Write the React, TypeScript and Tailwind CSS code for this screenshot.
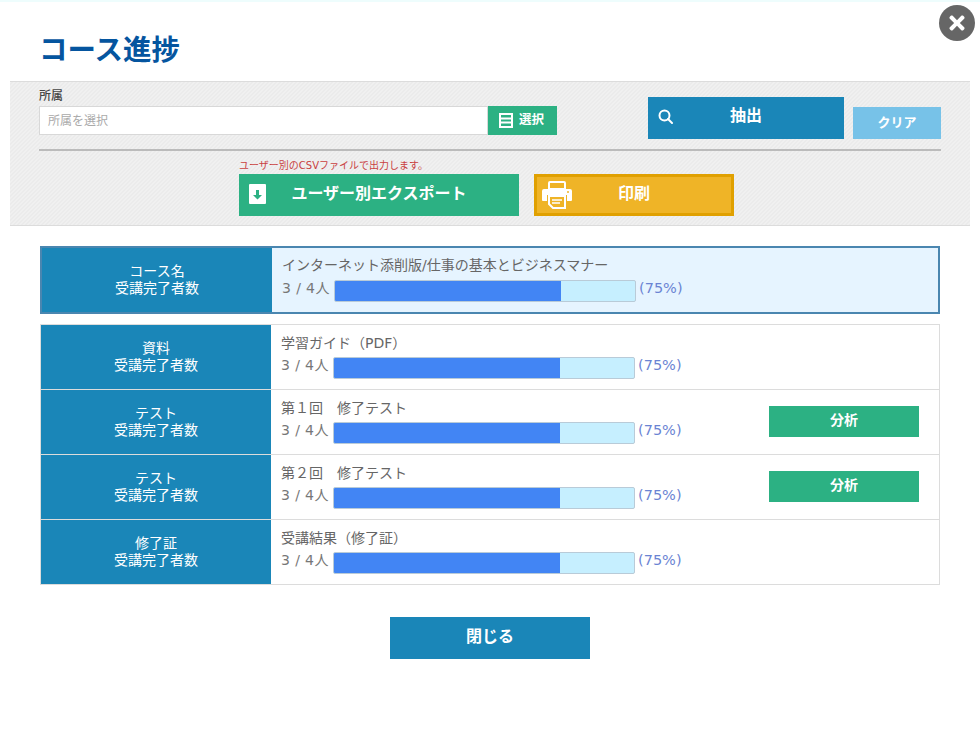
import { FaTimes } from 'react-icons/fa';

const font = { fontFamily: '"DejaVu Sans", "Noto Sans CJK JP", sans-serif' };

function ListIcon() {
  return (
    <svg width="14" height="15" viewBox="0 0 14 15" fill="none" stroke="white" strokeWidth="2">
      <rect x="1" y="1" width="12" height="13" />
      <path d="M1 5.5h12M1 9.5h12" />
    </svg>
  );
}

function SearchIcon() {
  return (
    <svg width="15" height="15" viewBox="0 0 15 15" fill="none" stroke="white" strokeWidth="2">
      <circle cx="6.5" cy="6.5" r="5" />
      <path d="M10 10l4 4" strokeLinecap="round" />
    </svg>
  );
}

function DownloadIcon() {
  return (
    <svg width="17" height="20" viewBox="0 0 17 20">
      <rect width="17" height="20" rx="1" fill="white" />
      <path d="M7 6h3v5h3l-4.5 4.5L4 11h3z" fill="#2cb183" />
    </svg>
  );
}

function PrintIcon() {
  return (
    <svg width="30" height="28" viewBox="0 0 30 28">
      <path d="M7 8V2a1 1 0 0 1 1-1h14a1 1 0 0 1 1 1v6z" fill="none" stroke="white" strokeWidth="2" />
      <path d="M2 8h26a2 2 0 0 1 2 2v9a1 1 0 0 1-1 1h-4v-6H5v6H1a1 1 0 0 1-1-1v-9a2 2 0 0 1 2-2z" fill="white" />
      <circle cx="26" cy="11" r="1" fill="#efb427" />
      <path d="M7 15h16v12H11l-4-4z" fill="none" stroke="white" strokeWidth="2" />
      <path d="M10 19h10M10 22h8" stroke="white" strokeWidth="1.5" />
    </svg>
  );
}

function Progress() {
  return (
    <div className="flex h-[22px] items-center text-[#777]">
      <span className="mb-[6px] w-[52px] whitespace-nowrap text-[14px] leading-[16px] tracking-[0.4px]">3 / 4人</span>
      <div className="flex h-[22px] w-[302px] overflow-hidden rounded-[2px] border border-[#b9cbd8] bg-[#c6efff]">
        <div className="-my-px -ml-px w-[227px] bg-[#4285f4]" />
      </div>
      <span className="mb-[6px] ml-[3px] text-[14.5px] leading-[16px] text-[#6b84d3]">(75%)</span>
    </div>
  );
}

function HeadCell({ first }: { first: string }) {
  return (
    <div className="flex w-[230px] shrink-0 flex-col items-center justify-center bg-[#1a86b8] text-[14px] leading-[17px] text-white">
      <span>{first}</span>
      <span>受講完了者数</span>
    </div>
  );
}

function Row({ head, title, analyze, last }: { head: string; title: string; analyze?: boolean; last?: boolean }) {
  return (
    <div className={`flex ${last ? 'h-[64px]' : 'h-[65px] border-b border-[#dcdcdc]'}`}>
      <HeadCell first={head} />
      <div className="flex-1 pl-[10px] pt-[9px]">
        <div className="mb-[5px] h-[18px] text-[14px] leading-[18px] text-[#666]">{title}</div>
        <Progress />
      </div>
      {analyze && (
        <div className="flex w-[170px] items-start pt-[16px]">
          <button className="h-[31px] w-[150px] bg-[#2cb183] pb-[2px] text-[14px] font-bold text-white">分析</button>
        </div>
      )}
    </div>
  );
}

export default function App() {
  return (
    <div className="relative h-[740px] w-[980px] overflow-hidden border-t-2 border-[#eefdfd] bg-white" style={font}>
      <button className="absolute left-[939px] top-[3px] flex h-[36px] w-[36px] items-center justify-center rounded-full bg-[#666] text-white">
        <FaTimes size={22} />
      </button>

      <h1 className="pl-[39px] pt-[30px] text-[28.5px] font-bold leading-[38px] text-[#05559f]">コース進捗</h1>

      <div className="ml-[10px] mt-[11px] w-[960px] border-y border-[#dcdcdc] bg-[repeating-linear-gradient(135deg,#f0f0f0_0px,#f0f0f0_1.414px,#ebebeb_1.414px,#ebebeb_2.828px)] px-[29px] pb-[9px] pt-[7px]">
        <div className="flex items-start">
          <div className="w-[518px]">
            <div className="h-[17px] text-[12px] font-medium leading-[14px] text-[#444]">所属</div>
            <div className="flex h-[29px]">
              <div className="flex flex-1 items-center border border-[#d8d8d8] bg-white pl-[8px] text-[12px] text-[#aaa]">所属を選択</div>
              <button className="flex w-[69px] items-center justify-center gap-[6px] bg-[#2cb183] pr-[2px] text-[12.5px] font-bold text-white">
                <ListIcon />
                選択
              </button>
            </div>
          </div>
          <button className="relative ml-[91px] mt-[8px] flex h-[42px] w-[196px] items-center justify-center bg-[#1a86b8] pb-[4px] text-[16px] font-bold text-white">
            <span className="absolute left-[10px] top-[12px]"><SearchIcon /></span>
            抽出
          </button>
          <button className="ml-[9px] mt-[18px] h-[32px] w-[88px] bg-[#77c2e8] text-[13px] font-bold text-white">クリア</button>
        </div>

        <div className="mt-[10px] h-[2px] bg-[#bbbbbb]" />

        <div className="ml-[200px] mt-[8px] h-[15px] text-[10px] leading-[14px] text-[#c9403f]">ユーザー別のCSVファイルで出力します。</div>
        <div className="flex gap-[15px]">
          <button className="relative ml-[200px] h-[42px] w-[280px] bg-[#2cb183] pb-[3px] text-[16px] font-bold text-white">
            <span className="absolute left-[10px] top-[10px]"><DownloadIcon /></span>
            ユーザー別エクスポート
          </button>
          <button className="relative h-[42px] w-[200px] border-[3px] border-[#e0a000] bg-[#efb427] pb-[2px] text-[16px] font-bold text-white">
            <span className="absolute left-[5px] top-[4px]"><PrintIcon /></span>
            印刷
          </button>
        </div>
      </div>

      <div className="ml-[40px] mt-[20px] w-[900px]">
        <div className="flex h-[68px] border-2 border-[#4a86b0] bg-[#e6f4ff]">
          <HeadCell first="コース名" />
          <div className="flex-1 pl-[10px] pt-[8px]">
            <div className="mb-[6px] h-[18px] text-[14px] leading-[18px] text-[#666]">インターネット添削版/仕事の基本とビジネスマナー</div>
            <Progress />
          </div>
        </div>

        <div className="mt-[10px] border border-[#dcdcdc]">
          <Row head="資料" title="学習ガイド（PDF）" />
          <Row head="テスト" title="第１回　修了テスト" analyze />
          <Row head="テスト" title="第２回　修了テスト" analyze />
          <Row head="修了証" title="受講結果（修了証）" last />
        </div>

        <div className="mt-[32px] flex justify-center">
          <button className="h-[42px] w-[200px] bg-[#1a86b8] pb-[2px] text-[16px] font-bold text-white">閉じる</button>
        </div>
      </div>
    </div>
  );
}
